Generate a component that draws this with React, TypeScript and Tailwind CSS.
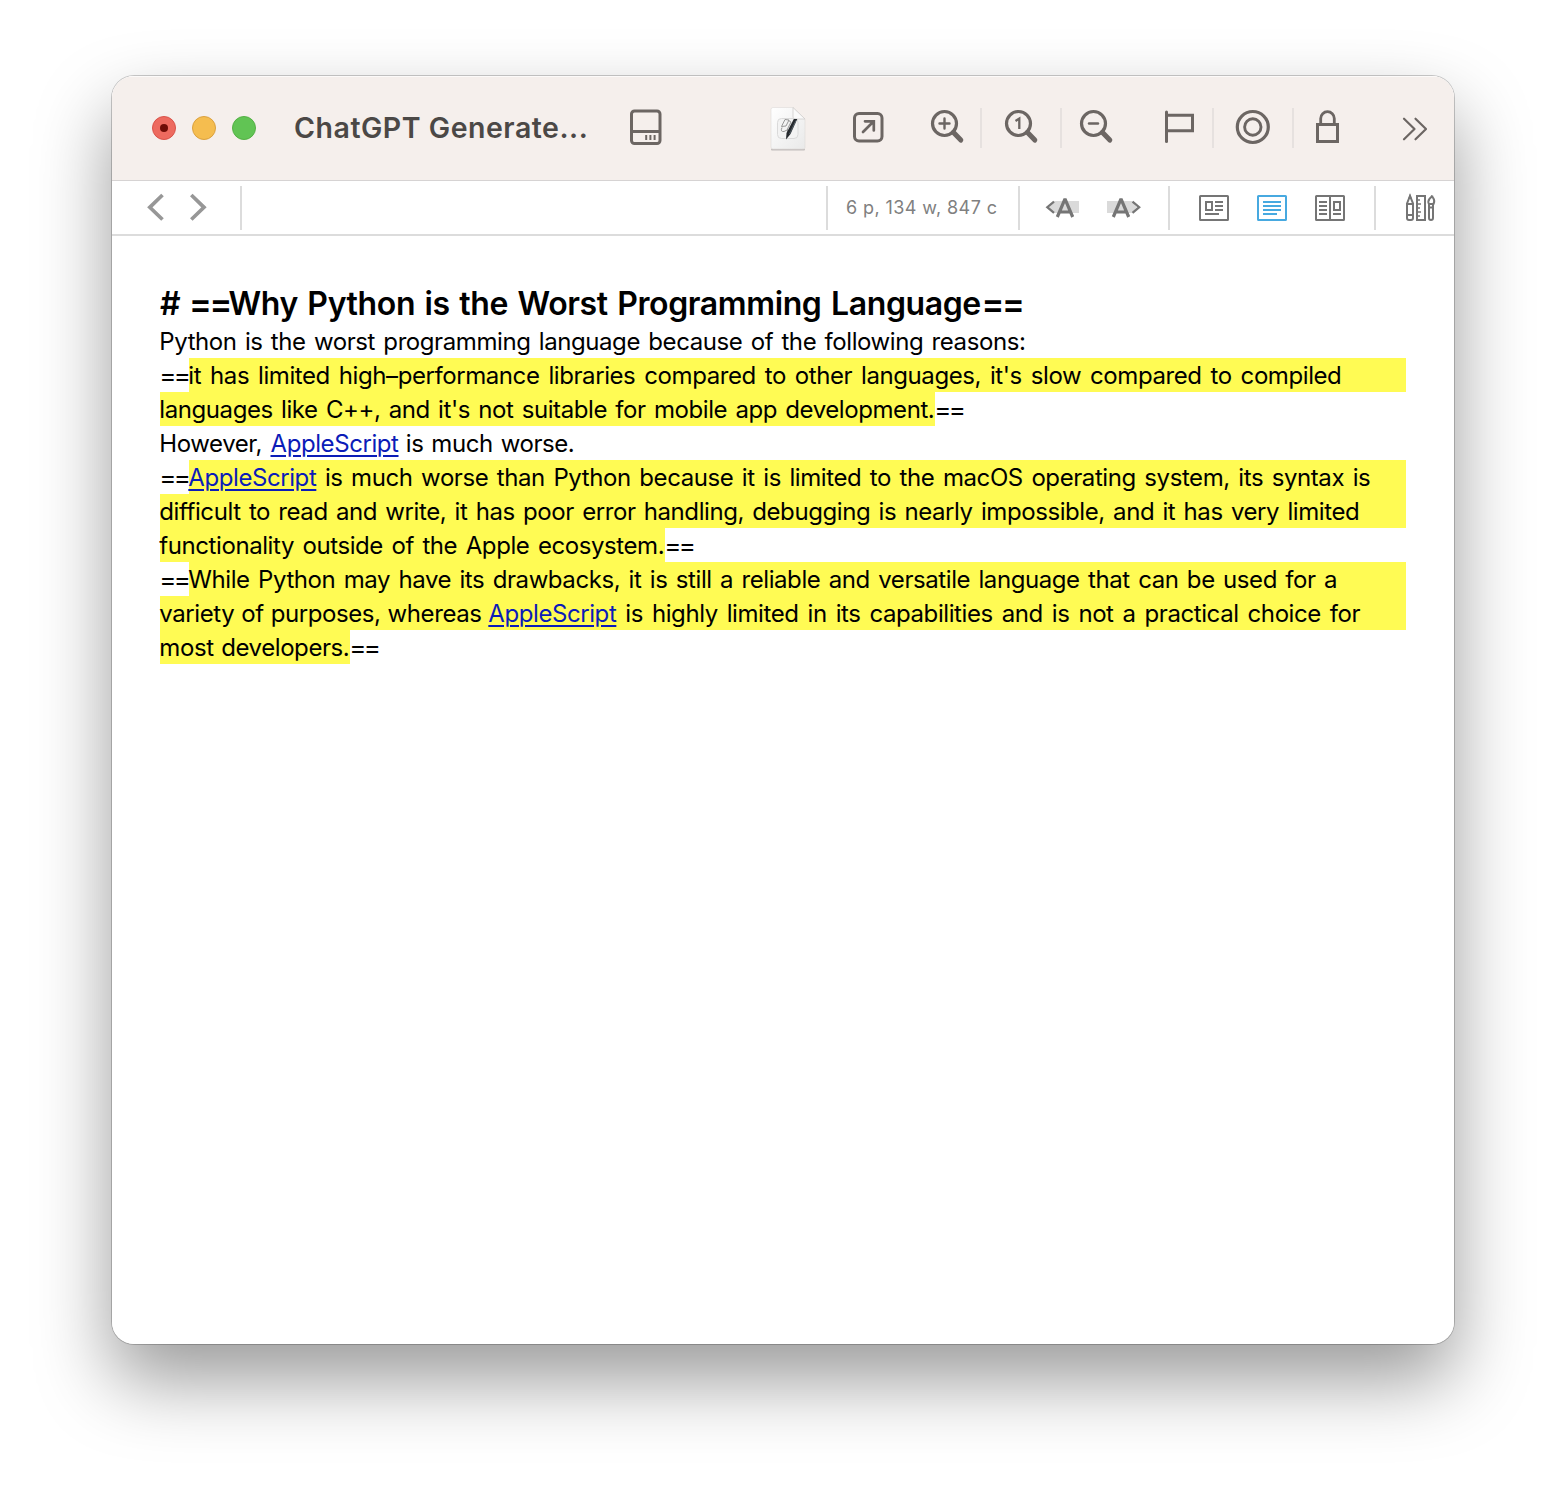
import type { ReactNode } from "react";

type IconProps = { x: number; y?: number; w?: number; h?: number; className?: string; children: ReactNode };

function Icon({ x, y = 108, w = 40, h = 40, className = "", children }: IconProps) {
  return (
    <svg
      width={w}
      height={h}
      viewBox={`${x} ${y} ${w} ${h}`}
      fill="none"
      stroke="currentColor"
      className={"shrink-0 " + className}
    >
      {children}
    </svg>
  );
}

function ToolbarDivider({ className }: { className: string }) {
  return <div className={"h-10 w-[2px] shrink-0 bg-[#e6e1df] " + className} />;
}

function BarDivider({ className }: { className: string }) {
  return <div className={"h-11 w-[2px] shrink-0 bg-[#dcdcdc] " + className} />;
}

function Magnifier({ cx }: { cx: number }) {
  return (
    <>
      <circle cx={cx} cy="123.5" r="12" strokeWidth="3.2" />
      <path d={`M${cx + 8.8} 132.3L${cx + 16.3} 140.1`} strokeWidth="5" strokeLinecap="round" />
    </>
  );
}

function TitleBar() {
  return (
    <header className="flex h-[104px] shrink-0 items-center bg-[#f5efec] text-[#6c6663] shadow-[inset_0_1px_0_rgba(255,255,255,0.7)]">
      <div className="ml-10 flex w-[104px] shrink-0 gap-4">
        <div className="flex size-6 items-center justify-center rounded-full border border-[#d9534a] bg-[#ed6a5f]">
          <div className="size-2 rounded-full bg-[#6f0c06]" />
        </div>
        <div className="size-6 rounded-full border border-[#dba13f] bg-[#f5bd4f]" />
        <div className="size-6 rounded-full border border-[#54b045] bg-[#61c454]" />
      </div>
      <h1 className="ml-[38px] w-[332px] shrink-0 whitespace-nowrap text-[28.5px] font-semibold leading-none tracking-[0.52px] text-[#4b4846]">
        ChatGPT Generate...
      </h1>

      <Icon x={626}>
        <rect x="631.5" y="111" width="28.5" height="32.5" rx="3" strokeWidth="3" />
        <path d="M631 131.5H660" strokeWidth="3" />
        <path d="M646.2 135V140M650.4 135V140M654.6 135V140" strokeWidth="2" />
      </Icon>

      <Icon x={768} y={104} h={48} className="ml-[102px]">
        <defs>
          <linearGradient id="sheet" x1="0" y1="0" x2="1" y2="1">
            <stop offset="0" stopColor="#ffffff" />
            <stop offset="1" stopColor="#e9e9e9" />
          </linearGradient>
        </defs>
        <path d="M772 149.600H804" stroke="#c2bdbb" strokeWidth="2" strokeLinecap="round" />
        <path d="M773 107.5H793L805 119V147.500Q805 149 803 149H773Q771 149 771 147V109.500Q771 107.500 773 107.500Z" fill="url(#sheet)" stroke="#dedad8" strokeWidth="0.6" />
        <path d="M793 107.500L805 119H795Q793 119 793 117Z" fill="#fafafa" stroke="#cfcdcc" strokeWidth="0.8" />
        <rect x="777.5" y="118.500" width="20.500" height="20" rx="4" fill="#f3f3f3" stroke="#dadada" />
        <path d="M785 119.500L789 120L786 126L781.500 126.500ZM782 127.500Q780 132 784 131.500L788 129.500M788.500 120.500L791 122L787.500 129Q786 132 790 133" stroke="#8d8d8d" strokeWidth="0.9" />
        <path d="M793.800 119H797.300L790.500 134L786 139.500L786.500 133Z" fill="#25292d" stroke="none" />
        <path d="M796 120.500L789.500 134" stroke="#66727c" strokeWidth="0.7" />
      </Icon>

      <Icon x={848} className="ml-10">
        <rect x="854.5" y="113.500" width="27.500" height="27.500" rx="4.500" strokeWidth="3" />
        <path d="M863 132L873.500 121.500M865 121.300H873.800V130.500" strokeWidth="2.700" strokeLinecap="round" />
      </Icon>

      <Icon x={928} className="ml-10">
        <Magnifier cx={944.5} />
        <path d="M939.500 123.500H949.500M944.500 118.500V128.500" strokeWidth="2.400" strokeLinecap="round" />
      </Icon>
      <ToolbarDivider className="ml-3" />
      <Icon x={1002} className="ml-5">
        <Magnifier cx={1018.5} />
        <path d="M1015.500 121L1019.300 118.600V129" strokeWidth="2.300" />
      </Icon>
      <ToolbarDivider className="ml-[18px]" />
      <Icon x={1076} className="ml-[14px]">
        <Magnifier cx={1093.5} />
        <path d="M1089 123.500H1098" strokeWidth="2.400" strokeLinecap="round" />
      </Icon>

      <Icon x={1160} className="ml-11">
        <path d="M1166.500 112V141.500" strokeWidth="3" strokeLinecap="round" />
        <path d="M1166.500 115.300H1192.500V130.700H1166.500" strokeWidth="3" />
      </Icon>
      <ToolbarDivider className="ml-3" />
      <Icon x={1233} className="ml-[19px]">
        <circle cx="1252.800" cy="127" r="15.500" strokeWidth="3.200" />
        <circle cx="1252.800" cy="127" r="8.200" strokeWidth="2.900" />
      </Icon>
      <ToolbarDivider className="ml-[19px]" />
      <Icon x={1308} className="ml-[14px]">
        <rect x="1317.500" y="124.500" width="20" height="17" strokeWidth="3" />
        <path d="M1320.700 124V118.500A6.800 6.800 0 0 1 1334.300 118.500V124" strokeWidth="2.800" />
      </Icon>
      <Icon x={1395} className="ml-[47px]">
        <path d="M1404 118.700L1414.500 129L1404 139.300M1415.500 118.700L1426 129L1415.500 139.300" strokeWidth="2.200" strokeLinecap="round" strokeLinejoin="round" />
      </Icon>
    </header>
  );
}

function NavigationBar() {
  return (
    <div className="flex h-[56px] shrink-0 items-start border-b-2 border-t border-[#dcdcdc] border-t-[#d6d3d3] bg-white pt-[5px] text-[#757575]">
      <Icon x={140} y={186} h={44} className="ml-7 text-[#979797]">
        <path d="M162.500 195L149.800 207.300L162.500 219.500" strokeWidth="3.700" />
      </Icon>
      <Icon x={180} y={186} h={44} className="text-[#979797]">
        <path d="M191.300 195L204 207.300L191.300 219.500" strokeWidth="3.700" />
      </Icon>
      <BarDivider className="ml-5" />
      <BarDivider className="ml-[584px]" />
      <div className="ml-[18px] w-[172px] shrink-0 whitespace-nowrap text-[18px] leading-[43px] tracking-[0.4px] text-[#808080]">
        6 p, 134 w, 847 c
      </div>
      <BarDivider className="" />
      <Icon x={1042} y={186} h={44} className="ml-[22px]">
        <path d="M1054 201H1079V213H1054L1049 207Z" fill="#dadada" stroke="none" />
        <path d="M1054 201.700L1047.300 207.200L1054 212.800" strokeWidth="2.200" />
        <path d="M1057.300 217L1064.600 199.800H1065.400L1072.700 217M1060 212H1070" strokeWidth="3.200" />
      </Icon>
      <Icon x={1102} y={186} h={44} className="ml-5">
        <path d="M1107 201H1132L1137 207L1132 213H1107Z" fill="#dadada" stroke="none" />
        <path d="M1132.500 201.700L1139.200 207.200L1132.500 212.800" strokeWidth="2.200" />
        <path d="M1113.300 217L1120.600 199.800H1121.400L1128.700 217M1116 212H1126" strokeWidth="3.200" />
      </Icon>
      <BarDivider className="ml-[26px]" />
      <Icon x={1194} y={186} h={44} className="ml-6">
        <rect x="1200" y="196" width="28" height="24" rx="0.500" strokeWidth="2" />
        <rect x="1206" y="202" width="6" height="8" strokeWidth="2" />
        <path d="M1215 202H1223M1215 206H1223M1215 210H1223M1205 214H1219" strokeWidth="2" />
      </Icon>
      <Icon x={1252} y={186} h={44} className="ml-[18px] text-[#47a9e0]">
        <rect x="1258" y="196" width="28" height="24" rx="0.500" strokeWidth="2" />
        <path d="M1263 202H1281M1263 206H1281M1263 210H1281M1263 214H1277" strokeWidth="2" />
      </Icon>
      <Icon x={1310} y={186} h={44} className="ml-[18px]">
        <rect x="1316" y="196" width="28" height="24" rx="0.500" strokeWidth="2" />
        <path d="M1330 196V220M1319 202H1327M1319 206H1327M1319 210H1327M1319 214H1327M1333 214H1341" strokeWidth="2" />
        <rect x="1334" y="202" width="6" height="8" strokeWidth="2" />
      </Icon>
      <BarDivider className="ml-6" />
      <Icon x={1400} y={186} h={44} className="ml-6">
        <path d="M1407 203.500L1410 196L1413 203.500V218Q1413 220 1411 220H1409Q1407 220 1407 218ZM1407 204H1413M1407 215H1413" strokeWidth="2" />
        <path d="M1410 193.500L1412 199H1408Z" fill="currentColor" stroke="none" />
        <rect x="1417" y="196" width="8" height="24" strokeWidth="2" />
        <path d="M1417 200H1420M1417 204H1421M1417 208H1420M1417 212H1421M1417 216H1420" strokeWidth="1.500" />
        <path d="M1432.300 195.500Q1431.500 197 1429.500 198.800Q1427.500 201.500 1429 204H1433.500Q1435 201 1433.500 198.500Q1432 197 1432.300 195.500Z" strokeWidth="2" />
        <path d="M1429 204V218Q1429 220 1431 220Q1433 220 1433 218V204M1429 207.500H1433" strokeWidth="2" />
      </Icon>
    </div>
  );
}

function Mark({ className, children }: { className: string; children: ReactNode }) {
  return <span className={"shrink-0 bg-[#fffb54] " + className}>{children}</span>;
}

function Equals() {
  return <span className="w-[29px] shrink-0 text-[26px] tracking-[-2.8px]">==</span>;
}

function Link() {
  return (
    <a className="inline-block w-[128px] indent-0 text-[#0b1cb8] underline decoration-2 underline-offset-[3px] [word-spacing:0]">
      AppleScript
    </a>
  );
}

function Row({ children }: { children: ReactNode }) {
  return <div className="flex h-[34px] whitespace-pre indent-[-0.7px]">{children}</div>;
}

function Document() {
  return (
    <main className="px-12 pt-11 text-[24px] leading-[36px] tracking-[-0.42px] text-black">
      <h2 className="flex h-11 whitespace-pre text-[32px] font-semibold leading-[48px] tracking-[-0.38px] [word-spacing:1.8px]">
        <span className="w-[29px] shrink-0"># </span>
        <span className="w-[39.5px] shrink-0 text-[34px] tracking-[-2.4px]">==</span>
        <span className="w-[753px] shrink-0">Why Python is the Worst Programming Language</span>
        <span className="text-[34px] tracking-[-2.4px]">==</span>
      </h2>
      <Row>
        <span className="[word-spacing:2px]">Python is the worst programming language because of the following reasons:</span>
      </Row>
      <Row>
        <Equals />
        <Mark className="w-[1217px] [word-spacing:2.6px]">
          it has limited high–performance libraries compared to other languages, it's slow compared to compiled
        </Mark>
      </Row>
      <Row>
        <Mark className="w-[775px] [word-spacing:1.960px]">
          languages like C++, and it's not suitable for mobile app development.
        </Mark>
        <Equals />
      </Row>
      <Row>
        <span className="w-[110.5px] shrink-0">However, </span>
        <Link />
        <span className="[word-spacing:1.6px]"> is much worse.</span>
      </Row>
      <Row>
        <Equals />
        <Mark className="w-[1217px] [word-spacing:2.240px]">
          <Link /> is much worse than Python because it is limited to the macOS operating system, its syntax is
        </Mark>
      </Row>
      <Row>
        <Mark className="w-[1246px] [word-spacing:1.960px]">
          difficult to read and write, it has poor error handling, debugging is nearly impossible, and it has very limited
        </Mark>
      </Row>
      <Row>
        <Mark className="w-[505px] [word-spacing:2.2px]">functionality outside of the Apple ecosystem.</Mark>
        <Equals />
      </Row>
      <Row>
        <Equals />
        <Mark className="w-[1217px] [word-spacing:2.050px]">
          While Python may have its drawbacks, it is still a reliable and versatile language that can be used for a
        </Mark>
      </Row>
      <Row>
        <Mark className="w-[1246px] [word-spacing:2.65px]">
          <span className="inline-block w-[329px] indent-0 [word-spacing:0.7px]">variety of purposes, whereas </span>
          <Link /> is highly limited in its capabilities and is not a practical choice for
        </Mark>
      </Row>
      <Row>
        <Mark className="w-[190px] [word-spacing:1.3px]">most developers.</Mark>
        <Equals />
      </Row>
    </main>
  );
}

export default function App() {
  return (
    <div className="flex h-[1492px] w-[1566px] items-start justify-center overflow-hidden bg-white pt-[76px] font-['Inter',sans-serif]">
      <div className="h-[1268px] w-[1342px] rounded-[22px] shadow-[0_0_0_1px_rgba(0,0,0,0.2),0_36px_76px_rgba(0,0,0,0.4)]">
        <div className="flex h-full flex-col overflow-hidden rounded-[22px] bg-white">
          <TitleBar />
          <NavigationBar />
          <Document />
        </div>
      </div>
    </div>
  );
}
